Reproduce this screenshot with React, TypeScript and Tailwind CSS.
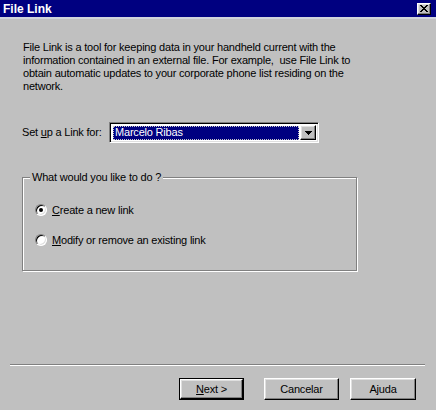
export default function App() {
  const raised =
    "border border-t-white border-l-white border-r-black border-b-black shadow-[inset_-1px_-1px_0_#808080,inset_1px_1px_0_#dfdfdf]";

  return (
    <div className="flex h-[410px] w-[436px] flex-col overflow-hidden bg-[#c0c0c0] font-['Liberation_Sans',Arial,sans-serif] text-[11px] tracking-[-0.2px] text-black">
      {/* title bar */}
      <div className="flex h-[17px] items-center justify-between bg-[#000080] pl-[3px] pr-[5px]">
        <span className="text-[12px] font-bold leading-none tracking-normal text-white">File Link</span>
        <div className={`flex h-[12px] w-[14px] items-center justify-center bg-[#c0c0c0] ${raised}`}>
          <svg width="8" height="7" viewBox="0 0 8 7" shapeRendering="crispEdges">
            <path d="M0 0h2v1H0zM6 0h2v1H6zM1 1h2v1H1zM5 1h2v1H5zM2 2h4v1H2zM3 3h2v1H3zM2 4h4v1H2zM1 5h2v1H1zM5 5h2v1H5zM0 6h2v1H0zM6 6h2v1H6z" fill="#000" />
          </svg>
        </div>
      </div>
      <div className="h-[2px] bg-[#d0d4dc]" />

      <div className="flex flex-col pl-[22px]">
        <p className="mt-[22px] pl-[1px] leading-[13px]">
          File Link is a tool for keeping data in your handheld current with the
          <br />
          information contained in an external file. For example,&nbsp; use File Link to
          <br />
          obtain automatic updates to your corporate phone list residing on the
          <br />
          network.
        </p>

        <div className="mt-[29px] flex h-[21px] items-center">
          <span className="w-[87px]">
            Set <span className="underline">u</span>p a Link for:
          </span>
          <div className="flex h-[21px] w-[210px] border border-t-[#808080] border-l-[#808080] border-b-white border-r-white bg-white shadow-[inset_1px_1px_0_#000,inset_-1px_-1px_0_#dfdfdf] p-[2px]">
            <div className="flex flex-1 items-center pl-[1px]">
              <div className="flex h-[14px] flex-1 items-center border border-dotted border-[#c8c8c8] bg-[#000080] pl-[1px] text-white">
                Marcelo Ribas
              </div>
            </div>
            <div className={`ml-[1px] flex w-[16px] items-center justify-center bg-[#c0c0c0] ${raised}`}>
              <svg width="7" height="4" viewBox="0 0 7 4" shapeRendering="crispEdges">
                <path d="M0 0h7v1H0zM1 1h5v1H1zM2 2h3v1H2zM3 3h1v1H3z" fill="#000" />
              </svg>
            </div>
          </div>
        </div>

        <div className="relative mt-[34px] h-[94px] w-[335px] border border-[#808080] shadow-[inset_1px_1px_0_#fff,1px_1px_0_#fff]">
          <span className="absolute left-[7px] top-[-7px] bg-[#c0c0c0] px-[2px] leading-[13px]">
            What would you like to do ?
          </span>
          <div className="flex flex-col gap-[18px] pl-[12px] pt-[26px]">
            <label className="flex h-[12px] items-center gap-[5px]">
              <span className="flex h-[12px] w-[12px] items-center justify-center rounded-full border border-t-[#808080] border-l-[#808080] border-b-white border-r-white bg-white shadow-[inset_1px_1px_0_#000,inset_-1px_-1px_0_#dfdfdf]">
                <span className="h-[4px] w-[4px] rounded-full bg-black" />
              </span>
              <span>
                <span className="underline">C</span>reate a new link
              </span>
            </label>
            <label className="flex h-[12px] items-center gap-[5px]">
              <span className="h-[12px] w-[12px] rounded-full border border-t-[#808080] border-l-[#808080] border-b-white border-r-white bg-white shadow-[inset_1px_1px_0_#000,inset_-1px_-1px_0_#dfdfdf]" />
              <span>
                <span className="underline">M</span>odify or remove an existing link
              </span>
            </label>
          </div>
        </div>
      </div>

      {/* separator */}
      <div className="ml-[10px] mt-[93px] h-[2px] w-[415px] border-t border-t-[#808080] border-b border-b-white" />

      <div className="mt-[12px] flex pl-[179px]">
        <div className="h-[22px] w-[65px] border border-black">
          <button className={`flex h-full w-full items-center justify-center bg-[#c0c0c0] ${raised}`}>
            <span>
              <span className="underline">N</span>ext &gt;
            </span>
          </button>
        </div>
        <button className={`ml-[20px] flex h-[22px] w-[75px] items-center justify-center bg-[#c0c0c0] ${raised}`}>
          Cancelar
        </button>
        <button className={`ml-[11px] flex h-[22px] w-[66px] items-center justify-center bg-[#c0c0c0] ${raised}`}>
          Ajuda
        </button>
      </div>
    </div>
  );
}
